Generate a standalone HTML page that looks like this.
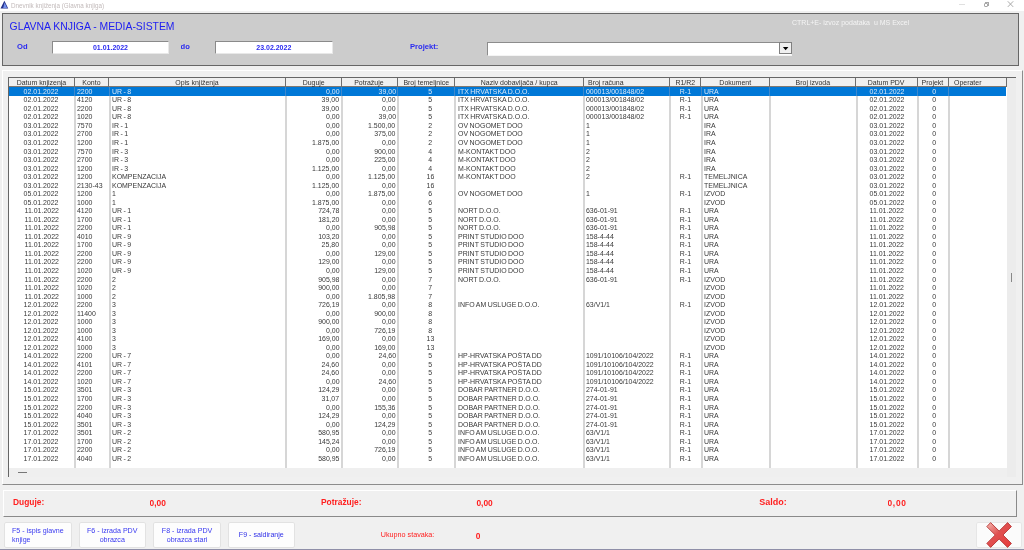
<!DOCTYPE html>
<html><head><meta charset="utf-8"><style>
*{margin:0;padding:0;box-sizing:border-box}
html,body{width:1024px;height:550px;overflow:hidden;background:#f0f0f0;font-family:"Liberation Sans",sans-serif}
.a{position:absolute}
.t{position:absolute;white-space:nowrap;overflow:hidden}
.hd{font-size:8px;color:#303030;line-height:9px}
.s{display:inline-block;transform:scaleX(.87)}
.l .s{transform-origin:0 50%}.c .s{transform-origin:50% 50%}.r .s{transform-origin:100% 50%}
.rw{font-size:8px;color:#383838;line-height:8.5px;word-spacing:-0.5px}
.sel{color:#d8e8f8}
.lbl{font-weight:bold;color:#2a2af0}
</style></head><body><div class="a" style="left:0;top:0;width:1024px;height:550px;will-change:transform">

<div class="a" style="left:0;top:0;width:1024px;height:10.5px;background:#fff"></div>
<svg class="a" style="left:0;top:0" width="10" height="10" viewBox="0 0 10 10"><polygon points="4.4,0.8 8.2,8.6 0.5,8.6" fill="#23308a"/><polygon points="4.6,2.6 7.1,7.9 3.2,7.9" fill="#7592ee"/></svg>
<div class="t" style="left:11px;top:1px;font-size:6.3px;line-height:9px;color:#c2baba">Dnevnik knjiženja (Glavna knjiga)</div>
<div class="a" style="left:959px;top:4px;width:6px;height:1px;background:#e0e0e0"></div>
<div class="a" style="left:983.5px;top:2.5px;width:4.5px;height:4.5px;border:1px solid #a8a8a8;border-radius:1px"></div>
<div class="a" style="left:985px;top:1.5px;width:4px;height:4px;border-top:1px solid #a8a8a8;border-right:1px solid #a8a8a8"></div>
<svg class="a" style="left:1006px;top:0" width="9" height="9" viewBox="0 0 9 9"><path d="M1.8,1.3 L7.2,6.9 M7.2,1.3 L1.8,6.9" stroke="#a0a0a0" stroke-width="0.9"/></svg>
<div class="a" style="left:2px;top:13px;width:1017px;height:53px;background:#cccccc;border:1px solid #666;border-right-width:1.3px;border-bottom-width:1.3px"></div>
<div class="t" style="left:9.6px;top:20px;font-size:10.4px;line-height:13px;color:#2020f0">GLAVNA KNJIGA - MEDIA-SISTEM</div>
<div class="t" style="left:792px;top:17.6px;font-size:7px;line-height:10px;color:#f4f4f4">CTRL+E- izvoz podataka &nbsp;u MS Excel</div>
<div class="t lbl" style="left:17px;top:41.5px;font-size:7.6px;line-height:10px">Od</div>
<div class="t lbl" style="left:180.5px;top:41.5px;font-size:7.6px;line-height:10px">do</div>
<div class="t lbl" style="left:410px;top:41.5px;font-size:7.6px;line-height:10px">Projekt:</div>
<div class="a" style="left:52px;top:40.6px;width:117px;height:13.6px;background:#fff;border-top:1px solid #8a8a8a;border-left:1px solid #8a8a8a;border-bottom:1px solid #e8e8e8;border-right:1px solid #e8e8e8"></div>
<div class="t lbl" style="left:52px;top:42.6px;width:117px;text-align:center;font-size:7px;line-height:10px">01.01.2022</div>
<div class="a" style="left:215px;top:40.6px;width:117.60000000000002px;height:13.6px;background:#fff;border-top:1px solid #8a8a8a;border-left:1px solid #8a8a8a;border-bottom:1px solid #e8e8e8;border-right:1px solid #e8e8e8"></div>
<div class="t lbl" style="left:215px;top:42.6px;width:117.60000000000002px;text-align:center;font-size:7px;line-height:10px">23.02.2022</div>
<div class="a" style="left:487.3px;top:41.7px;width:305.2px;height:14px;background:#fff;border-top:1px solid #8c8c8c;border-left:1px solid #8c8c8c;border-bottom:1px solid #f4f4f4;border-right:1px solid #f4f4f4"></div>
<div class="a" style="left:779.2px;top:42.1px;width:12.5px;height:11.8px;background:#f0f0f0;border:1px solid #808080"></div>
<svg class="a" style="left:782px;top:46px" width="8" height="5" viewBox="0 0 8 5"><polygon points="0.9,0.9 6.4,0.9 3.65,4.2" fill="#000"/></svg>
<div class="a" style="left:2px;top:70px;width:1021px;height:415px;background:#f0f0f0;border-top:1px solid #fff;border-left:1px solid #fff;border-right:1.2px solid #8c8c8c;border-bottom:1.2px solid #8c8c8c"></div>
<div class="a" style="left:9px;top:87px;width:998.3px;height:381.4px;background:#fff"></div>
<div class="a" style="left:1007.3px;top:78px;width:9px;height:399px;background:#ececec"></div>
<div class="a" style="left:1011px;top:273px;width:1.1px;height:9px;background:#888"></div>
<div class="a" style="left:9px;top:468.4px;width:998.3px;height:8.6px;background:#efefef"></div>
<div class="a" style="left:18px;top:472px;width:9px;height:0.8px;background:#777"></div>
<div class="a" style="left:8.3px;top:77.3px;width:1.1px;height:399.7px;background:#666"></div>
<div class="a" style="left:8.3px;top:77.3px;width:1008px;height:1.1px;background:#666"></div>
<div class="a" style="left:9.4px;top:78.4px;width:997.1px;height:8px;background:#f0f0f0"></div>
<div class="a" style="left:9.4px;top:86.1px;width:997.1px;height:0.9px;background:#807870"></div>
<div class="a" style="left:73.8px;top:78.4px;width:1.1px;height:8.6px;background:#6e6e6e"></div>
<div class="a" style="left:74.0px;top:87px;width:2px;height:381.4px;background:#d6d6d6"></div>
<div class="a" style="left:108.3px;top:78.4px;width:1.1px;height:8.6px;background:#6e6e6e"></div>
<div class="a" style="left:108.5px;top:87px;width:2px;height:381.4px;background:#d6d6d6"></div>
<div class="a" style="left:284.9px;top:78.4px;width:1.1px;height:8.6px;background:#6e6e6e"></div>
<div class="a" style="left:285.09999999999997px;top:87px;width:2px;height:381.4px;background:#d6d6d6"></div>
<div class="a" style="left:340.7px;top:78.4px;width:1.1px;height:8.6px;background:#6e6e6e"></div>
<div class="a" style="left:340.9px;top:87px;width:2px;height:381.4px;background:#d6d6d6"></div>
<div class="a" style="left:397.1px;top:78.4px;width:1.1px;height:8.6px;background:#6e6e6e"></div>
<div class="a" style="left:397.3px;top:87px;width:2px;height:381.4px;background:#d6d6d6"></div>
<div class="a" style="left:454.2px;top:78.4px;width:1.1px;height:8.6px;background:#6e6e6e"></div>
<div class="a" style="left:454.4px;top:87px;width:2px;height:381.4px;background:#d6d6d6"></div>
<div class="a" style="left:582.8px;top:78.4px;width:1.1px;height:8.6px;background:#6e6e6e"></div>
<div class="a" style="left:583.0px;top:87px;width:2px;height:381.4px;background:#d6d6d6"></div>
<div class="a" style="left:669.1px;top:78.4px;width:1.1px;height:8.6px;background:#6e6e6e"></div>
<div class="a" style="left:669.3000000000001px;top:87px;width:2px;height:381.4px;background:#d6d6d6"></div>
<div class="a" style="left:700.4px;top:78.4px;width:1.1px;height:8.6px;background:#6e6e6e"></div>
<div class="a" style="left:700.6px;top:87px;width:2px;height:381.4px;background:#d6d6d6"></div>
<div class="a" style="left:768.9px;top:78.4px;width:1.1px;height:8.6px;background:#6e6e6e"></div>
<div class="a" style="left:769.1px;top:87px;width:2px;height:381.4px;background:#d6d6d6"></div>
<div class="a" style="left:855.3px;top:78.4px;width:1.1px;height:8.6px;background:#6e6e6e"></div>
<div class="a" style="left:855.5px;top:87px;width:2px;height:381.4px;background:#d6d6d6"></div>
<div class="a" style="left:916.8px;top:78.4px;width:1.1px;height:8.6px;background:#6e6e6e"></div>
<div class="a" style="left:917.0px;top:87px;width:2px;height:381.4px;background:#d6d6d6"></div>
<div class="a" style="left:948.0px;top:78.4px;width:1.1px;height:8.6px;background:#6e6e6e"></div>
<div class="a" style="left:948.2px;top:87px;width:2px;height:381.4px;background:#d6d6d6"></div>
<div class="a" style="left:1006.0px;top:78.4px;width:1.1px;height:8.6px;background:#6e6e6e"></div>
<div class="a" style="left:9.4px;top:87.3px;width:997.1px;height:8.4px;background:#0078d7"></div>
<div class="a" style="left:74.0px;top:87.3px;width:1px;height:8.4px;background:#3d88cc"></div>
<div class="a" style="left:108.5px;top:87.3px;width:1px;height:8.4px;background:#3d88cc"></div>
<div class="a" style="left:285.09999999999997px;top:87.3px;width:1px;height:8.4px;background:#3d88cc"></div>
<div class="a" style="left:340.9px;top:87.3px;width:1px;height:8.4px;background:#3d88cc"></div>
<div class="a" style="left:397.3px;top:87.3px;width:1px;height:8.4px;background:#3d88cc"></div>
<div class="a" style="left:454.4px;top:87.3px;width:1px;height:8.4px;background:#3d88cc"></div>
<div class="a" style="left:583.0px;top:87.3px;width:1px;height:8.4px;background:#3d88cc"></div>
<div class="a" style="left:669.3000000000001px;top:87.3px;width:1px;height:8.4px;background:#3d88cc"></div>
<div class="a" style="left:700.6px;top:87.3px;width:1px;height:8.4px;background:#3d88cc"></div>
<div class="a" style="left:769.1px;top:87.3px;width:1px;height:8.4px;background:#3d88cc"></div>
<div class="a" style="left:855.5px;top:87.3px;width:1px;height:8.4px;background:#3d88cc"></div>
<div class="a" style="left:917.0px;top:87.3px;width:1px;height:8.4px;background:#3d88cc"></div>
<div class="a" style="left:948.2px;top:87.3px;width:1px;height:8.4px;background:#3d88cc"></div>
<div class="a" style="left:0;top:0;width:1024px;height:550px;will-change:transform">
<div class="t hd c" style="left:9.5px;top:77.6px;width:63.8px;text-align:center;"><span class="s">Datum knjizenja</span></div>
<div class="t hd c" style="left:75.3px;top:77.6px;width:32.5px;text-align:center;"><span class="s">Konto</span></div>
<div class="t hd c" style="left:109.8px;top:77.6px;width:174.6px;text-align:center;"><span class="s">Opis knjiženja</span></div>
<div class="t hd c" style="left:286.4px;top:77.6px;width:53.8px;text-align:center;"><span class="s">Duguje</span></div>
<div class="t hd c" style="left:342.2px;top:77.6px;width:54.4px;text-align:center;"><span class="s">Potražuje</span></div>
<div class="t hd c" style="left:398.6px;top:77.6px;width:55.1px;text-align:center;"><span class="s">Broj temeljnice</span></div>
<div class="t hd c" style="left:455.7px;top:77.6px;width:126.6px;text-align:center;"><span class="s">Naziv dobavljača / kupca</span></div>
<div class="t hd l" style="left:584.3px;top:77.6px;width:84.3px;text-align:left;padding-left:4px;"><span class="s">Broj računa</span></div>
<div class="t hd c" style="left:670.6px;top:77.6px;width:29.3px;text-align:center;"><span class="s">R1/R2</span></div>
<div class="t hd c" style="left:701.9px;top:77.6px;width:66.5px;text-align:center;"><span class="s">Dokument</span></div>
<div class="t hd c" style="left:770.4px;top:77.6px;width:84.4px;text-align:center;"><span class="s">Broj izvoda</span></div>
<div class="t hd c" style="left:856.8px;top:77.6px;width:59.5px;text-align:center;"><span class="s">Datum PDV</span></div>
<div class="t hd c" style="left:918.3px;top:77.6px;width:29.2px;text-align:center;"><span class="s">Projekt</span></div>
<div class="t hd l" style="left:949.5px;top:77.6px;width:56.0px;text-align:left;padding-left:4px;"><span class="s">Operater</span></div>
<div class="t rw sel c" style="left:9.5px;top:87.80px;width:63.8px;text-align:center;"><span class="s">02.01.2022</span></div>
<div class="t rw sel l" style="left:75.3px;top:87.80px;width:32.5px;text-align:left;padding-left:2px;"><span class="s">2200</span></div>
<div class="t rw sel l" style="left:109.8px;top:87.80px;width:174.6px;text-align:left;padding-left:2px;"><span class="s">UR - 8</span></div>
<div class="t rw sel r" style="left:286.4px;top:87.80px;width:53.8px;text-align:right;padding-right:1px;"><span class="s">0,00</span></div>
<div class="t rw sel r" style="left:342.2px;top:87.80px;width:54.4px;text-align:right;padding-right:1px;"><span class="s">39,00</span></div>
<div class="t rw sel c" style="left:398.6px;top:87.80px;width:55.1px;text-align:center;padding-left:8px;"><span class="s">5</span></div>
<div class="t rw sel l" style="left:455.7px;top:87.80px;width:126.6px;text-align:left;padding-left:2px;"><span class="s">ITX HRVATSKA D.O.O.</span></div>
<div class="t rw sel l" style="left:584.3px;top:87.80px;width:84.3px;text-align:left;padding-left:2px;"><span class="s">000013/001848/02</span></div>
<div class="t rw sel c" style="left:670.6px;top:87.80px;width:29.3px;text-align:center;"><span class="s">R-1</span></div>
<div class="t rw sel l" style="left:701.9px;top:87.80px;width:66.5px;text-align:left;padding-left:2px;"><span class="s">URA</span></div>
<div class="t rw sel c" style="left:856.8px;top:87.80px;width:59.5px;text-align:center;"><span class="s">02.01.2022</span></div>
<div class="t rw sel c" style="left:918.3px;top:87.80px;width:29.2px;text-align:center;padding-left:3px;"><span class="s">0</span></div>
<div class="t rw c" style="left:9.5px;top:96.33px;width:63.8px;text-align:center;"><span class="s">02.01.2022</span></div>
<div class="t rw l" style="left:75.3px;top:96.33px;width:32.5px;text-align:left;padding-left:2px;"><span class="s">4120</span></div>
<div class="t rw l" style="left:109.8px;top:96.33px;width:174.6px;text-align:left;padding-left:2px;"><span class="s">UR - 8</span></div>
<div class="t rw r" style="left:286.4px;top:96.33px;width:53.8px;text-align:right;padding-right:1px;"><span class="s">39,00</span></div>
<div class="t rw r" style="left:342.2px;top:96.33px;width:54.4px;text-align:right;padding-right:1px;"><span class="s">0,00</span></div>
<div class="t rw c" style="left:398.6px;top:96.33px;width:55.1px;text-align:center;padding-left:8px;"><span class="s">5</span></div>
<div class="t rw l" style="left:455.7px;top:96.33px;width:126.6px;text-align:left;padding-left:2px;"><span class="s">ITX HRVATSKA D.O.O.</span></div>
<div class="t rw l" style="left:584.3px;top:96.33px;width:84.3px;text-align:left;padding-left:2px;"><span class="s">000013/001848/02</span></div>
<div class="t rw c" style="left:670.6px;top:96.33px;width:29.3px;text-align:center;"><span class="s">R-1</span></div>
<div class="t rw l" style="left:701.9px;top:96.33px;width:66.5px;text-align:left;padding-left:2px;"><span class="s">URA</span></div>
<div class="t rw c" style="left:856.8px;top:96.33px;width:59.5px;text-align:center;"><span class="s">02.01.2022</span></div>
<div class="t rw c" style="left:918.3px;top:96.33px;width:29.2px;text-align:center;padding-left:3px;"><span class="s">0</span></div>
<div class="t rw c" style="left:9.5px;top:104.87px;width:63.8px;text-align:center;"><span class="s">02.01.2022</span></div>
<div class="t rw l" style="left:75.3px;top:104.87px;width:32.5px;text-align:left;padding-left:2px;"><span class="s">2200</span></div>
<div class="t rw l" style="left:109.8px;top:104.87px;width:174.6px;text-align:left;padding-left:2px;"><span class="s">UR - 8</span></div>
<div class="t rw r" style="left:286.4px;top:104.87px;width:53.8px;text-align:right;padding-right:1px;"><span class="s">39,00</span></div>
<div class="t rw r" style="left:342.2px;top:104.87px;width:54.4px;text-align:right;padding-right:1px;"><span class="s">0,00</span></div>
<div class="t rw c" style="left:398.6px;top:104.87px;width:55.1px;text-align:center;padding-left:8px;"><span class="s">5</span></div>
<div class="t rw l" style="left:455.7px;top:104.87px;width:126.6px;text-align:left;padding-left:2px;"><span class="s">ITX HRVATSKA D.O.O.</span></div>
<div class="t rw l" style="left:584.3px;top:104.87px;width:84.3px;text-align:left;padding-left:2px;"><span class="s">000013/001848/02</span></div>
<div class="t rw c" style="left:670.6px;top:104.87px;width:29.3px;text-align:center;"><span class="s">R-1</span></div>
<div class="t rw l" style="left:701.9px;top:104.87px;width:66.5px;text-align:left;padding-left:2px;"><span class="s">URA</span></div>
<div class="t rw c" style="left:856.8px;top:104.87px;width:59.5px;text-align:center;"><span class="s">02.01.2022</span></div>
<div class="t rw c" style="left:918.3px;top:104.87px;width:29.2px;text-align:center;padding-left:3px;"><span class="s">0</span></div>
<div class="t rw c" style="left:9.5px;top:113.40px;width:63.8px;text-align:center;"><span class="s">02.01.2022</span></div>
<div class="t rw l" style="left:75.3px;top:113.40px;width:32.5px;text-align:left;padding-left:2px;"><span class="s">1020</span></div>
<div class="t rw l" style="left:109.8px;top:113.40px;width:174.6px;text-align:left;padding-left:2px;"><span class="s">UR - 8</span></div>
<div class="t rw r" style="left:286.4px;top:113.40px;width:53.8px;text-align:right;padding-right:1px;"><span class="s">0,00</span></div>
<div class="t rw r" style="left:342.2px;top:113.40px;width:54.4px;text-align:right;padding-right:1px;"><span class="s">39,00</span></div>
<div class="t rw c" style="left:398.6px;top:113.40px;width:55.1px;text-align:center;padding-left:8px;"><span class="s">5</span></div>
<div class="t rw l" style="left:455.7px;top:113.40px;width:126.6px;text-align:left;padding-left:2px;"><span class="s">ITX HRVATSKA D.O.O.</span></div>
<div class="t rw l" style="left:584.3px;top:113.40px;width:84.3px;text-align:left;padding-left:2px;"><span class="s">000013/001848/02</span></div>
<div class="t rw c" style="left:670.6px;top:113.40px;width:29.3px;text-align:center;"><span class="s">R-1</span></div>
<div class="t rw l" style="left:701.9px;top:113.40px;width:66.5px;text-align:left;padding-left:2px;"><span class="s">URA</span></div>
<div class="t rw c" style="left:856.8px;top:113.40px;width:59.5px;text-align:center;"><span class="s">02.01.2022</span></div>
<div class="t rw c" style="left:918.3px;top:113.40px;width:29.2px;text-align:center;padding-left:3px;"><span class="s">0</span></div>
<div class="t rw c" style="left:9.5px;top:121.93px;width:63.8px;text-align:center;"><span class="s">03.01.2022</span></div>
<div class="t rw l" style="left:75.3px;top:121.93px;width:32.5px;text-align:left;padding-left:2px;"><span class="s">7570</span></div>
<div class="t rw l" style="left:109.8px;top:121.93px;width:174.6px;text-align:left;padding-left:2px;"><span class="s">IR - 1</span></div>
<div class="t rw r" style="left:286.4px;top:121.93px;width:53.8px;text-align:right;padding-right:1px;"><span class="s">0,00</span></div>
<div class="t rw r" style="left:342.2px;top:121.93px;width:54.4px;text-align:right;padding-right:1px;"><span class="s">1.500,00</span></div>
<div class="t rw c" style="left:398.6px;top:121.93px;width:55.1px;text-align:center;padding-left:8px;"><span class="s">2</span></div>
<div class="t rw l" style="left:455.7px;top:121.93px;width:126.6px;text-align:left;padding-left:2px;"><span class="s">OV NOGOMET DOO</span></div>
<div class="t rw l" style="left:584.3px;top:121.93px;width:84.3px;text-align:left;padding-left:2px;"><span class="s">1</span></div>
<div class="t rw l" style="left:701.9px;top:121.93px;width:66.5px;text-align:left;padding-left:2px;"><span class="s">IRA</span></div>
<div class="t rw c" style="left:856.8px;top:121.93px;width:59.5px;text-align:center;"><span class="s">03.01.2022</span></div>
<div class="t rw c" style="left:918.3px;top:121.93px;width:29.2px;text-align:center;padding-left:3px;"><span class="s">0</span></div>
<div class="t rw c" style="left:9.5px;top:130.47px;width:63.8px;text-align:center;"><span class="s">03.01.2022</span></div>
<div class="t rw l" style="left:75.3px;top:130.47px;width:32.5px;text-align:left;padding-left:2px;"><span class="s">2700</span></div>
<div class="t rw l" style="left:109.8px;top:130.47px;width:174.6px;text-align:left;padding-left:2px;"><span class="s">IR - 1</span></div>
<div class="t rw r" style="left:286.4px;top:130.47px;width:53.8px;text-align:right;padding-right:1px;"><span class="s">0,00</span></div>
<div class="t rw r" style="left:342.2px;top:130.47px;width:54.4px;text-align:right;padding-right:1px;"><span class="s">375,00</span></div>
<div class="t rw c" style="left:398.6px;top:130.47px;width:55.1px;text-align:center;padding-left:8px;"><span class="s">2</span></div>
<div class="t rw l" style="left:455.7px;top:130.47px;width:126.6px;text-align:left;padding-left:2px;"><span class="s">OV NOGOMET DOO</span></div>
<div class="t rw l" style="left:584.3px;top:130.47px;width:84.3px;text-align:left;padding-left:2px;"><span class="s">1</span></div>
<div class="t rw l" style="left:701.9px;top:130.47px;width:66.5px;text-align:left;padding-left:2px;"><span class="s">IRA</span></div>
<div class="t rw c" style="left:856.8px;top:130.47px;width:59.5px;text-align:center;"><span class="s">03.01.2022</span></div>
<div class="t rw c" style="left:918.3px;top:130.47px;width:29.2px;text-align:center;padding-left:3px;"><span class="s">0</span></div>
<div class="t rw c" style="left:9.5px;top:139.00px;width:63.8px;text-align:center;"><span class="s">03.01.2022</span></div>
<div class="t rw l" style="left:75.3px;top:139.00px;width:32.5px;text-align:left;padding-left:2px;"><span class="s">1200</span></div>
<div class="t rw l" style="left:109.8px;top:139.00px;width:174.6px;text-align:left;padding-left:2px;"><span class="s">IR - 1</span></div>
<div class="t rw r" style="left:286.4px;top:139.00px;width:53.8px;text-align:right;padding-right:1px;"><span class="s">1.875,00</span></div>
<div class="t rw r" style="left:342.2px;top:139.00px;width:54.4px;text-align:right;padding-right:1px;"><span class="s">0,00</span></div>
<div class="t rw c" style="left:398.6px;top:139.00px;width:55.1px;text-align:center;padding-left:8px;"><span class="s">2</span></div>
<div class="t rw l" style="left:455.7px;top:139.00px;width:126.6px;text-align:left;padding-left:2px;"><span class="s">OV NOGOMET DOO</span></div>
<div class="t rw l" style="left:584.3px;top:139.00px;width:84.3px;text-align:left;padding-left:2px;"><span class="s">1</span></div>
<div class="t rw l" style="left:701.9px;top:139.00px;width:66.5px;text-align:left;padding-left:2px;"><span class="s">IRA</span></div>
<div class="t rw c" style="left:856.8px;top:139.00px;width:59.5px;text-align:center;"><span class="s">03.01.2022</span></div>
<div class="t rw c" style="left:918.3px;top:139.00px;width:29.2px;text-align:center;padding-left:3px;"><span class="s">0</span></div>
<div class="t rw c" style="left:9.5px;top:147.53px;width:63.8px;text-align:center;"><span class="s">03.01.2022</span></div>
<div class="t rw l" style="left:75.3px;top:147.53px;width:32.5px;text-align:left;padding-left:2px;"><span class="s">7570</span></div>
<div class="t rw l" style="left:109.8px;top:147.53px;width:174.6px;text-align:left;padding-left:2px;"><span class="s">IR - 3</span></div>
<div class="t rw r" style="left:286.4px;top:147.53px;width:53.8px;text-align:right;padding-right:1px;"><span class="s">0,00</span></div>
<div class="t rw r" style="left:342.2px;top:147.53px;width:54.4px;text-align:right;padding-right:1px;"><span class="s">900,00</span></div>
<div class="t rw c" style="left:398.6px;top:147.53px;width:55.1px;text-align:center;padding-left:8px;"><span class="s">4</span></div>
<div class="t rw l" style="left:455.7px;top:147.53px;width:126.6px;text-align:left;padding-left:2px;"><span class="s">M-KONTAKT DOO</span></div>
<div class="t rw l" style="left:584.3px;top:147.53px;width:84.3px;text-align:left;padding-left:2px;"><span class="s">2</span></div>
<div class="t rw l" style="left:701.9px;top:147.53px;width:66.5px;text-align:left;padding-left:2px;"><span class="s">IRA</span></div>
<div class="t rw c" style="left:856.8px;top:147.53px;width:59.5px;text-align:center;"><span class="s">03.01.2022</span></div>
<div class="t rw c" style="left:918.3px;top:147.53px;width:29.2px;text-align:center;padding-left:3px;"><span class="s">0</span></div>
<div class="t rw c" style="left:9.5px;top:156.06px;width:63.8px;text-align:center;"><span class="s">03.01.2022</span></div>
<div class="t rw l" style="left:75.3px;top:156.06px;width:32.5px;text-align:left;padding-left:2px;"><span class="s">2700</span></div>
<div class="t rw l" style="left:109.8px;top:156.06px;width:174.6px;text-align:left;padding-left:2px;"><span class="s">IR - 3</span></div>
<div class="t rw r" style="left:286.4px;top:156.06px;width:53.8px;text-align:right;padding-right:1px;"><span class="s">0,00</span></div>
<div class="t rw r" style="left:342.2px;top:156.06px;width:54.4px;text-align:right;padding-right:1px;"><span class="s">225,00</span></div>
<div class="t rw c" style="left:398.6px;top:156.06px;width:55.1px;text-align:center;padding-left:8px;"><span class="s">4</span></div>
<div class="t rw l" style="left:455.7px;top:156.06px;width:126.6px;text-align:left;padding-left:2px;"><span class="s">M-KONTAKT DOO</span></div>
<div class="t rw l" style="left:584.3px;top:156.06px;width:84.3px;text-align:left;padding-left:2px;"><span class="s">2</span></div>
<div class="t rw l" style="left:701.9px;top:156.06px;width:66.5px;text-align:left;padding-left:2px;"><span class="s">IRA</span></div>
<div class="t rw c" style="left:856.8px;top:156.06px;width:59.5px;text-align:center;"><span class="s">03.01.2022</span></div>
<div class="t rw c" style="left:918.3px;top:156.06px;width:29.2px;text-align:center;padding-left:3px;"><span class="s">0</span></div>
<div class="t rw c" style="left:9.5px;top:164.60px;width:63.8px;text-align:center;"><span class="s">03.01.2022</span></div>
<div class="t rw l" style="left:75.3px;top:164.60px;width:32.5px;text-align:left;padding-left:2px;"><span class="s">1200</span></div>
<div class="t rw l" style="left:109.8px;top:164.60px;width:174.6px;text-align:left;padding-left:2px;"><span class="s">IR - 3</span></div>
<div class="t rw r" style="left:286.4px;top:164.60px;width:53.8px;text-align:right;padding-right:1px;"><span class="s">1.125,00</span></div>
<div class="t rw r" style="left:342.2px;top:164.60px;width:54.4px;text-align:right;padding-right:1px;"><span class="s">0,00</span></div>
<div class="t rw c" style="left:398.6px;top:164.60px;width:55.1px;text-align:center;padding-left:8px;"><span class="s">4</span></div>
<div class="t rw l" style="left:455.7px;top:164.60px;width:126.6px;text-align:left;padding-left:2px;"><span class="s">M-KONTAKT DOO</span></div>
<div class="t rw l" style="left:584.3px;top:164.60px;width:84.3px;text-align:left;padding-left:2px;"><span class="s">2</span></div>
<div class="t rw l" style="left:701.9px;top:164.60px;width:66.5px;text-align:left;padding-left:2px;"><span class="s">IRA</span></div>
<div class="t rw c" style="left:856.8px;top:164.60px;width:59.5px;text-align:center;"><span class="s">03.01.2022</span></div>
<div class="t rw c" style="left:918.3px;top:164.60px;width:29.2px;text-align:center;padding-left:3px;"><span class="s">0</span></div>
<div class="t rw c" style="left:9.5px;top:173.13px;width:63.8px;text-align:center;"><span class="s">03.01.2022</span></div>
<div class="t rw l" style="left:75.3px;top:173.13px;width:32.5px;text-align:left;padding-left:2px;"><span class="s">1200</span></div>
<div class="t rw l" style="left:109.8px;top:173.13px;width:174.6px;text-align:left;padding-left:2px;"><span class="s">KOMPENZACIJA</span></div>
<div class="t rw r" style="left:286.4px;top:173.13px;width:53.8px;text-align:right;padding-right:1px;"><span class="s">0,00</span></div>
<div class="t rw r" style="left:342.2px;top:173.13px;width:54.4px;text-align:right;padding-right:1px;"><span class="s">1.125,00</span></div>
<div class="t rw c" style="left:398.6px;top:173.13px;width:55.1px;text-align:center;padding-left:8px;"><span class="s">16</span></div>
<div class="t rw l" style="left:455.7px;top:173.13px;width:126.6px;text-align:left;padding-left:2px;"><span class="s">M-KONTAKT DOO</span></div>
<div class="t rw l" style="left:584.3px;top:173.13px;width:84.3px;text-align:left;padding-left:2px;"><span class="s">2</span></div>
<div class="t rw c" style="left:670.6px;top:173.13px;width:29.3px;text-align:center;"><span class="s">R-1</span></div>
<div class="t rw l" style="left:701.9px;top:173.13px;width:66.5px;text-align:left;padding-left:2px;"><span class="s">TEMELJNICA</span></div>
<div class="t rw c" style="left:856.8px;top:173.13px;width:59.5px;text-align:center;"><span class="s">03.01.2022</span></div>
<div class="t rw c" style="left:918.3px;top:173.13px;width:29.2px;text-align:center;padding-left:3px;"><span class="s">0</span></div>
<div class="t rw c" style="left:9.5px;top:181.66px;width:63.8px;text-align:center;"><span class="s">03.01.2022</span></div>
<div class="t rw l" style="left:75.3px;top:181.66px;width:32.5px;text-align:left;padding-left:2px;"><span class="s">2130-43</span></div>
<div class="t rw l" style="left:109.8px;top:181.66px;width:174.6px;text-align:left;padding-left:2px;"><span class="s">KOMPENZACIJA</span></div>
<div class="t rw r" style="left:286.4px;top:181.66px;width:53.8px;text-align:right;padding-right:1px;"><span class="s">1.125,00</span></div>
<div class="t rw r" style="left:342.2px;top:181.66px;width:54.4px;text-align:right;padding-right:1px;"><span class="s">0,00</span></div>
<div class="t rw c" style="left:398.6px;top:181.66px;width:55.1px;text-align:center;padding-left:8px;"><span class="s">16</span></div>
<div class="t rw l" style="left:701.9px;top:181.66px;width:66.5px;text-align:left;padding-left:2px;"><span class="s">TEMELJNICA</span></div>
<div class="t rw c" style="left:856.8px;top:181.66px;width:59.5px;text-align:center;"><span class="s">03.01.2022</span></div>
<div class="t rw c" style="left:918.3px;top:181.66px;width:29.2px;text-align:center;padding-left:3px;"><span class="s">0</span></div>
<div class="t rw c" style="left:9.5px;top:190.20px;width:63.8px;text-align:center;"><span class="s">05.01.2022</span></div>
<div class="t rw l" style="left:75.3px;top:190.20px;width:32.5px;text-align:left;padding-left:2px;"><span class="s">1200</span></div>
<div class="t rw l" style="left:109.8px;top:190.20px;width:174.6px;text-align:left;padding-left:2px;"><span class="s">1</span></div>
<div class="t rw r" style="left:286.4px;top:190.20px;width:53.8px;text-align:right;padding-right:1px;"><span class="s">0,00</span></div>
<div class="t rw r" style="left:342.2px;top:190.20px;width:54.4px;text-align:right;padding-right:1px;"><span class="s">1.875,00</span></div>
<div class="t rw c" style="left:398.6px;top:190.20px;width:55.1px;text-align:center;padding-left:8px;"><span class="s">6</span></div>
<div class="t rw l" style="left:455.7px;top:190.20px;width:126.6px;text-align:left;padding-left:2px;"><span class="s">OV NOGOMET DOO</span></div>
<div class="t rw l" style="left:584.3px;top:190.20px;width:84.3px;text-align:left;padding-left:2px;"><span class="s">1</span></div>
<div class="t rw c" style="left:670.6px;top:190.20px;width:29.3px;text-align:center;"><span class="s">R-1</span></div>
<div class="t rw l" style="left:701.9px;top:190.20px;width:66.5px;text-align:left;padding-left:2px;"><span class="s">IZVOD</span></div>
<div class="t rw c" style="left:856.8px;top:190.20px;width:59.5px;text-align:center;"><span class="s">05.01.2022</span></div>
<div class="t rw c" style="left:918.3px;top:190.20px;width:29.2px;text-align:center;padding-left:3px;"><span class="s">0</span></div>
<div class="t rw c" style="left:9.5px;top:198.73px;width:63.8px;text-align:center;"><span class="s">05.01.2022</span></div>
<div class="t rw l" style="left:75.3px;top:198.73px;width:32.5px;text-align:left;padding-left:2px;"><span class="s">1000</span></div>
<div class="t rw l" style="left:109.8px;top:198.73px;width:174.6px;text-align:left;padding-left:2px;"><span class="s">1</span></div>
<div class="t rw r" style="left:286.4px;top:198.73px;width:53.8px;text-align:right;padding-right:1px;"><span class="s">1.875,00</span></div>
<div class="t rw r" style="left:342.2px;top:198.73px;width:54.4px;text-align:right;padding-right:1px;"><span class="s">0,00</span></div>
<div class="t rw c" style="left:398.6px;top:198.73px;width:55.1px;text-align:center;padding-left:8px;"><span class="s">6</span></div>
<div class="t rw l" style="left:701.9px;top:198.73px;width:66.5px;text-align:left;padding-left:2px;"><span class="s">IZVOD</span></div>
<div class="t rw c" style="left:856.8px;top:198.73px;width:59.5px;text-align:center;"><span class="s">05.01.2022</span></div>
<div class="t rw c" style="left:918.3px;top:198.73px;width:29.2px;text-align:center;padding-left:3px;"><span class="s">0</span></div>
<div class="t rw c" style="left:9.5px;top:207.26px;width:63.8px;text-align:center;"><span class="s">11.01.2022</span></div>
<div class="t rw l" style="left:75.3px;top:207.26px;width:32.5px;text-align:left;padding-left:2px;"><span class="s">4120</span></div>
<div class="t rw l" style="left:109.8px;top:207.26px;width:174.6px;text-align:left;padding-left:2px;"><span class="s">UR - 1</span></div>
<div class="t rw r" style="left:286.4px;top:207.26px;width:53.8px;text-align:right;padding-right:1px;"><span class="s">724,78</span></div>
<div class="t rw r" style="left:342.2px;top:207.26px;width:54.4px;text-align:right;padding-right:1px;"><span class="s">0,00</span></div>
<div class="t rw c" style="left:398.6px;top:207.26px;width:55.1px;text-align:center;padding-left:8px;"><span class="s">5</span></div>
<div class="t rw l" style="left:455.7px;top:207.26px;width:126.6px;text-align:left;padding-left:2px;"><span class="s">NORT D.O.O.</span></div>
<div class="t rw l" style="left:584.3px;top:207.26px;width:84.3px;text-align:left;padding-left:2px;"><span class="s">636-01-91</span></div>
<div class="t rw c" style="left:670.6px;top:207.26px;width:29.3px;text-align:center;"><span class="s">R-1</span></div>
<div class="t rw l" style="left:701.9px;top:207.26px;width:66.5px;text-align:left;padding-left:2px;"><span class="s">URA</span></div>
<div class="t rw c" style="left:856.8px;top:207.26px;width:59.5px;text-align:center;"><span class="s">11.01.2022</span></div>
<div class="t rw c" style="left:918.3px;top:207.26px;width:29.2px;text-align:center;padding-left:3px;"><span class="s">0</span></div>
<div class="t rw c" style="left:9.5px;top:215.80px;width:63.8px;text-align:center;"><span class="s">11.01.2022</span></div>
<div class="t rw l" style="left:75.3px;top:215.80px;width:32.5px;text-align:left;padding-left:2px;"><span class="s">1700</span></div>
<div class="t rw l" style="left:109.8px;top:215.80px;width:174.6px;text-align:left;padding-left:2px;"><span class="s">UR - 1</span></div>
<div class="t rw r" style="left:286.4px;top:215.80px;width:53.8px;text-align:right;padding-right:1px;"><span class="s">181,20</span></div>
<div class="t rw r" style="left:342.2px;top:215.80px;width:54.4px;text-align:right;padding-right:1px;"><span class="s">0,00</span></div>
<div class="t rw c" style="left:398.6px;top:215.80px;width:55.1px;text-align:center;padding-left:8px;"><span class="s">5</span></div>
<div class="t rw l" style="left:455.7px;top:215.80px;width:126.6px;text-align:left;padding-left:2px;"><span class="s">NORT D.O.O.</span></div>
<div class="t rw l" style="left:584.3px;top:215.80px;width:84.3px;text-align:left;padding-left:2px;"><span class="s">636-01-91</span></div>
<div class="t rw c" style="left:670.6px;top:215.80px;width:29.3px;text-align:center;"><span class="s">R-1</span></div>
<div class="t rw l" style="left:701.9px;top:215.80px;width:66.5px;text-align:left;padding-left:2px;"><span class="s">URA</span></div>
<div class="t rw c" style="left:856.8px;top:215.80px;width:59.5px;text-align:center;"><span class="s">11.01.2022</span></div>
<div class="t rw c" style="left:918.3px;top:215.80px;width:29.2px;text-align:center;padding-left:3px;"><span class="s">0</span></div>
<div class="t rw c" style="left:9.5px;top:224.33px;width:63.8px;text-align:center;"><span class="s">11.01.2022</span></div>
<div class="t rw l" style="left:75.3px;top:224.33px;width:32.5px;text-align:left;padding-left:2px;"><span class="s">2200</span></div>
<div class="t rw l" style="left:109.8px;top:224.33px;width:174.6px;text-align:left;padding-left:2px;"><span class="s">UR - 1</span></div>
<div class="t rw r" style="left:286.4px;top:224.33px;width:53.8px;text-align:right;padding-right:1px;"><span class="s">0,00</span></div>
<div class="t rw r" style="left:342.2px;top:224.33px;width:54.4px;text-align:right;padding-right:1px;"><span class="s">905,98</span></div>
<div class="t rw c" style="left:398.6px;top:224.33px;width:55.1px;text-align:center;padding-left:8px;"><span class="s">5</span></div>
<div class="t rw l" style="left:455.7px;top:224.33px;width:126.6px;text-align:left;padding-left:2px;"><span class="s">NORT D.O.O.</span></div>
<div class="t rw l" style="left:584.3px;top:224.33px;width:84.3px;text-align:left;padding-left:2px;"><span class="s">636-01-91</span></div>
<div class="t rw c" style="left:670.6px;top:224.33px;width:29.3px;text-align:center;"><span class="s">R-1</span></div>
<div class="t rw l" style="left:701.9px;top:224.33px;width:66.5px;text-align:left;padding-left:2px;"><span class="s">URA</span></div>
<div class="t rw c" style="left:856.8px;top:224.33px;width:59.5px;text-align:center;"><span class="s">11.01.2022</span></div>
<div class="t rw c" style="left:918.3px;top:224.33px;width:29.2px;text-align:center;padding-left:3px;"><span class="s">0</span></div>
<div class="t rw c" style="left:9.5px;top:232.86px;width:63.8px;text-align:center;"><span class="s">11.01.2022</span></div>
<div class="t rw l" style="left:75.3px;top:232.86px;width:32.5px;text-align:left;padding-left:2px;"><span class="s">4010</span></div>
<div class="t rw l" style="left:109.8px;top:232.86px;width:174.6px;text-align:left;padding-left:2px;"><span class="s">UR - 9</span></div>
<div class="t rw r" style="left:286.4px;top:232.86px;width:53.8px;text-align:right;padding-right:1px;"><span class="s">103,20</span></div>
<div class="t rw r" style="left:342.2px;top:232.86px;width:54.4px;text-align:right;padding-right:1px;"><span class="s">0,00</span></div>
<div class="t rw c" style="left:398.6px;top:232.86px;width:55.1px;text-align:center;padding-left:8px;"><span class="s">5</span></div>
<div class="t rw l" style="left:455.7px;top:232.86px;width:126.6px;text-align:left;padding-left:2px;"><span class="s">PRINT STUDIO DOO</span></div>
<div class="t rw l" style="left:584.3px;top:232.86px;width:84.3px;text-align:left;padding-left:2px;"><span class="s">158-4-44</span></div>
<div class="t rw c" style="left:670.6px;top:232.86px;width:29.3px;text-align:center;"><span class="s">R-1</span></div>
<div class="t rw l" style="left:701.9px;top:232.86px;width:66.5px;text-align:left;padding-left:2px;"><span class="s">URA</span></div>
<div class="t rw c" style="left:856.8px;top:232.86px;width:59.5px;text-align:center;"><span class="s">11.01.2022</span></div>
<div class="t rw c" style="left:918.3px;top:232.86px;width:29.2px;text-align:center;padding-left:3px;"><span class="s">0</span></div>
<div class="t rw c" style="left:9.5px;top:241.39px;width:63.8px;text-align:center;"><span class="s">11.01.2022</span></div>
<div class="t rw l" style="left:75.3px;top:241.39px;width:32.5px;text-align:left;padding-left:2px;"><span class="s">1700</span></div>
<div class="t rw l" style="left:109.8px;top:241.39px;width:174.6px;text-align:left;padding-left:2px;"><span class="s">UR - 9</span></div>
<div class="t rw r" style="left:286.4px;top:241.39px;width:53.8px;text-align:right;padding-right:1px;"><span class="s">25,80</span></div>
<div class="t rw r" style="left:342.2px;top:241.39px;width:54.4px;text-align:right;padding-right:1px;"><span class="s">0,00</span></div>
<div class="t rw c" style="left:398.6px;top:241.39px;width:55.1px;text-align:center;padding-left:8px;"><span class="s">5</span></div>
<div class="t rw l" style="left:455.7px;top:241.39px;width:126.6px;text-align:left;padding-left:2px;"><span class="s">PRINT STUDIO DOO</span></div>
<div class="t rw l" style="left:584.3px;top:241.39px;width:84.3px;text-align:left;padding-left:2px;"><span class="s">158-4-44</span></div>
<div class="t rw c" style="left:670.6px;top:241.39px;width:29.3px;text-align:center;"><span class="s">R-1</span></div>
<div class="t rw l" style="left:701.9px;top:241.39px;width:66.5px;text-align:left;padding-left:2px;"><span class="s">URA</span></div>
<div class="t rw c" style="left:856.8px;top:241.39px;width:59.5px;text-align:center;"><span class="s">11.01.2022</span></div>
<div class="t rw c" style="left:918.3px;top:241.39px;width:29.2px;text-align:center;padding-left:3px;"><span class="s">0</span></div>
<div class="t rw c" style="left:9.5px;top:249.93px;width:63.8px;text-align:center;"><span class="s">11.01.2022</span></div>
<div class="t rw l" style="left:75.3px;top:249.93px;width:32.5px;text-align:left;padding-left:2px;"><span class="s">2200</span></div>
<div class="t rw l" style="left:109.8px;top:249.93px;width:174.6px;text-align:left;padding-left:2px;"><span class="s">UR - 9</span></div>
<div class="t rw r" style="left:286.4px;top:249.93px;width:53.8px;text-align:right;padding-right:1px;"><span class="s">0,00</span></div>
<div class="t rw r" style="left:342.2px;top:249.93px;width:54.4px;text-align:right;padding-right:1px;"><span class="s">129,00</span></div>
<div class="t rw c" style="left:398.6px;top:249.93px;width:55.1px;text-align:center;padding-left:8px;"><span class="s">5</span></div>
<div class="t rw l" style="left:455.7px;top:249.93px;width:126.6px;text-align:left;padding-left:2px;"><span class="s">PRINT STUDIO DOO</span></div>
<div class="t rw l" style="left:584.3px;top:249.93px;width:84.3px;text-align:left;padding-left:2px;"><span class="s">158-4-44</span></div>
<div class="t rw c" style="left:670.6px;top:249.93px;width:29.3px;text-align:center;"><span class="s">R-1</span></div>
<div class="t rw l" style="left:701.9px;top:249.93px;width:66.5px;text-align:left;padding-left:2px;"><span class="s">URA</span></div>
<div class="t rw c" style="left:856.8px;top:249.93px;width:59.5px;text-align:center;"><span class="s">11.01.2022</span></div>
<div class="t rw c" style="left:918.3px;top:249.93px;width:29.2px;text-align:center;padding-left:3px;"><span class="s">0</span></div>
<div class="t rw c" style="left:9.5px;top:258.46px;width:63.8px;text-align:center;"><span class="s">11.01.2022</span></div>
<div class="t rw l" style="left:75.3px;top:258.46px;width:32.5px;text-align:left;padding-left:2px;"><span class="s">2200</span></div>
<div class="t rw l" style="left:109.8px;top:258.46px;width:174.6px;text-align:left;padding-left:2px;"><span class="s">UR - 9</span></div>
<div class="t rw r" style="left:286.4px;top:258.46px;width:53.8px;text-align:right;padding-right:1px;"><span class="s">129,00</span></div>
<div class="t rw r" style="left:342.2px;top:258.46px;width:54.4px;text-align:right;padding-right:1px;"><span class="s">0,00</span></div>
<div class="t rw c" style="left:398.6px;top:258.46px;width:55.1px;text-align:center;padding-left:8px;"><span class="s">5</span></div>
<div class="t rw l" style="left:455.7px;top:258.46px;width:126.6px;text-align:left;padding-left:2px;"><span class="s">PRINT STUDIO DOO</span></div>
<div class="t rw l" style="left:584.3px;top:258.46px;width:84.3px;text-align:left;padding-left:2px;"><span class="s">158-4-44</span></div>
<div class="t rw c" style="left:670.6px;top:258.46px;width:29.3px;text-align:center;"><span class="s">R-1</span></div>
<div class="t rw l" style="left:701.9px;top:258.46px;width:66.5px;text-align:left;padding-left:2px;"><span class="s">URA</span></div>
<div class="t rw c" style="left:856.8px;top:258.46px;width:59.5px;text-align:center;"><span class="s">11.01.2022</span></div>
<div class="t rw c" style="left:918.3px;top:258.46px;width:29.2px;text-align:center;padding-left:3px;"><span class="s">0</span></div>
<div class="t rw c" style="left:9.5px;top:266.99px;width:63.8px;text-align:center;"><span class="s">11.01.2022</span></div>
<div class="t rw l" style="left:75.3px;top:266.99px;width:32.5px;text-align:left;padding-left:2px;"><span class="s">1020</span></div>
<div class="t rw l" style="left:109.8px;top:266.99px;width:174.6px;text-align:left;padding-left:2px;"><span class="s">UR - 9</span></div>
<div class="t rw r" style="left:286.4px;top:266.99px;width:53.8px;text-align:right;padding-right:1px;"><span class="s">0,00</span></div>
<div class="t rw r" style="left:342.2px;top:266.99px;width:54.4px;text-align:right;padding-right:1px;"><span class="s">129,00</span></div>
<div class="t rw c" style="left:398.6px;top:266.99px;width:55.1px;text-align:center;padding-left:8px;"><span class="s">5</span></div>
<div class="t rw l" style="left:455.7px;top:266.99px;width:126.6px;text-align:left;padding-left:2px;"><span class="s">PRINT STUDIO DOO</span></div>
<div class="t rw l" style="left:584.3px;top:266.99px;width:84.3px;text-align:left;padding-left:2px;"><span class="s">158-4-44</span></div>
<div class="t rw c" style="left:670.6px;top:266.99px;width:29.3px;text-align:center;"><span class="s">R-1</span></div>
<div class="t rw l" style="left:701.9px;top:266.99px;width:66.5px;text-align:left;padding-left:2px;"><span class="s">URA</span></div>
<div class="t rw c" style="left:856.8px;top:266.99px;width:59.5px;text-align:center;"><span class="s">11.01.2022</span></div>
<div class="t rw c" style="left:918.3px;top:266.99px;width:29.2px;text-align:center;padding-left:3px;"><span class="s">0</span></div>
<div class="t rw c" style="left:9.5px;top:275.53px;width:63.8px;text-align:center;"><span class="s">11.01.2022</span></div>
<div class="t rw l" style="left:75.3px;top:275.53px;width:32.5px;text-align:left;padding-left:2px;"><span class="s">2200</span></div>
<div class="t rw l" style="left:109.8px;top:275.53px;width:174.6px;text-align:left;padding-left:2px;"><span class="s">2</span></div>
<div class="t rw r" style="left:286.4px;top:275.53px;width:53.8px;text-align:right;padding-right:1px;"><span class="s">905,98</span></div>
<div class="t rw r" style="left:342.2px;top:275.53px;width:54.4px;text-align:right;padding-right:1px;"><span class="s">0,00</span></div>
<div class="t rw c" style="left:398.6px;top:275.53px;width:55.1px;text-align:center;padding-left:8px;"><span class="s">7</span></div>
<div class="t rw l" style="left:455.7px;top:275.53px;width:126.6px;text-align:left;padding-left:2px;"><span class="s">NORT D.O.O.</span></div>
<div class="t rw l" style="left:584.3px;top:275.53px;width:84.3px;text-align:left;padding-left:2px;"><span class="s">636-01-91</span></div>
<div class="t rw c" style="left:670.6px;top:275.53px;width:29.3px;text-align:center;"><span class="s">R-1</span></div>
<div class="t rw l" style="left:701.9px;top:275.53px;width:66.5px;text-align:left;padding-left:2px;"><span class="s">IZVOD</span></div>
<div class="t rw c" style="left:856.8px;top:275.53px;width:59.5px;text-align:center;"><span class="s">11.01.2022</span></div>
<div class="t rw c" style="left:918.3px;top:275.53px;width:29.2px;text-align:center;padding-left:3px;"><span class="s">0</span></div>
<div class="t rw c" style="left:9.5px;top:284.06px;width:63.8px;text-align:center;"><span class="s">11.01.2022</span></div>
<div class="t rw l" style="left:75.3px;top:284.06px;width:32.5px;text-align:left;padding-left:2px;"><span class="s">1020</span></div>
<div class="t rw l" style="left:109.8px;top:284.06px;width:174.6px;text-align:left;padding-left:2px;"><span class="s">2</span></div>
<div class="t rw r" style="left:286.4px;top:284.06px;width:53.8px;text-align:right;padding-right:1px;"><span class="s">900,00</span></div>
<div class="t rw r" style="left:342.2px;top:284.06px;width:54.4px;text-align:right;padding-right:1px;"><span class="s">0,00</span></div>
<div class="t rw c" style="left:398.6px;top:284.06px;width:55.1px;text-align:center;padding-left:8px;"><span class="s">7</span></div>
<div class="t rw l" style="left:701.9px;top:284.06px;width:66.5px;text-align:left;padding-left:2px;"><span class="s">IZVOD</span></div>
<div class="t rw c" style="left:856.8px;top:284.06px;width:59.5px;text-align:center;"><span class="s">11.01.2022</span></div>
<div class="t rw c" style="left:918.3px;top:284.06px;width:29.2px;text-align:center;padding-left:3px;"><span class="s">0</span></div>
<div class="t rw c" style="left:9.5px;top:292.59px;width:63.8px;text-align:center;"><span class="s">11.01.2022</span></div>
<div class="t rw l" style="left:75.3px;top:292.59px;width:32.5px;text-align:left;padding-left:2px;"><span class="s">1000</span></div>
<div class="t rw l" style="left:109.8px;top:292.59px;width:174.6px;text-align:left;padding-left:2px;"><span class="s">2</span></div>
<div class="t rw r" style="left:286.4px;top:292.59px;width:53.8px;text-align:right;padding-right:1px;"><span class="s">0,00</span></div>
<div class="t rw r" style="left:342.2px;top:292.59px;width:54.4px;text-align:right;padding-right:1px;"><span class="s">1.805,98</span></div>
<div class="t rw c" style="left:398.6px;top:292.59px;width:55.1px;text-align:center;padding-left:8px;"><span class="s">7</span></div>
<div class="t rw l" style="left:701.9px;top:292.59px;width:66.5px;text-align:left;padding-left:2px;"><span class="s">IZVOD</span></div>
<div class="t rw c" style="left:856.8px;top:292.59px;width:59.5px;text-align:center;"><span class="s">11.01.2022</span></div>
<div class="t rw c" style="left:918.3px;top:292.59px;width:29.2px;text-align:center;padding-left:3px;"><span class="s">0</span></div>
<div class="t rw c" style="left:9.5px;top:301.12px;width:63.8px;text-align:center;"><span class="s">12.01.2022</span></div>
<div class="t rw l" style="left:75.3px;top:301.12px;width:32.5px;text-align:left;padding-left:2px;"><span class="s">2200</span></div>
<div class="t rw l" style="left:109.8px;top:301.12px;width:174.6px;text-align:left;padding-left:2px;"><span class="s">3</span></div>
<div class="t rw r" style="left:286.4px;top:301.12px;width:53.8px;text-align:right;padding-right:1px;"><span class="s">726,19</span></div>
<div class="t rw r" style="left:342.2px;top:301.12px;width:54.4px;text-align:right;padding-right:1px;"><span class="s">0,00</span></div>
<div class="t rw c" style="left:398.6px;top:301.12px;width:55.1px;text-align:center;padding-left:8px;"><span class="s">8</span></div>
<div class="t rw l" style="left:455.7px;top:301.12px;width:126.6px;text-align:left;padding-left:2px;"><span class="s">INFO AM USLUGE D.O.O.</span></div>
<div class="t rw l" style="left:584.3px;top:301.12px;width:84.3px;text-align:left;padding-left:2px;"><span class="s">63/V1/1</span></div>
<div class="t rw c" style="left:670.6px;top:301.12px;width:29.3px;text-align:center;"><span class="s">R-1</span></div>
<div class="t rw l" style="left:701.9px;top:301.12px;width:66.5px;text-align:left;padding-left:2px;"><span class="s">IZVOD</span></div>
<div class="t rw c" style="left:856.8px;top:301.12px;width:59.5px;text-align:center;"><span class="s">12.01.2022</span></div>
<div class="t rw c" style="left:918.3px;top:301.12px;width:29.2px;text-align:center;padding-left:3px;"><span class="s">0</span></div>
<div class="t rw c" style="left:9.5px;top:309.66px;width:63.8px;text-align:center;"><span class="s">12.01.2022</span></div>
<div class="t rw l" style="left:75.3px;top:309.66px;width:32.5px;text-align:left;padding-left:2px;"><span class="s">11400</span></div>
<div class="t rw l" style="left:109.8px;top:309.66px;width:174.6px;text-align:left;padding-left:2px;"><span class="s">3</span></div>
<div class="t rw r" style="left:286.4px;top:309.66px;width:53.8px;text-align:right;padding-right:1px;"><span class="s">0,00</span></div>
<div class="t rw r" style="left:342.2px;top:309.66px;width:54.4px;text-align:right;padding-right:1px;"><span class="s">900,00</span></div>
<div class="t rw c" style="left:398.6px;top:309.66px;width:55.1px;text-align:center;padding-left:8px;"><span class="s">8</span></div>
<div class="t rw l" style="left:701.9px;top:309.66px;width:66.5px;text-align:left;padding-left:2px;"><span class="s">IZVOD</span></div>
<div class="t rw c" style="left:856.8px;top:309.66px;width:59.5px;text-align:center;"><span class="s">12.01.2022</span></div>
<div class="t rw c" style="left:918.3px;top:309.66px;width:29.2px;text-align:center;padding-left:3px;"><span class="s">0</span></div>
<div class="t rw c" style="left:9.5px;top:318.19px;width:63.8px;text-align:center;"><span class="s">12.01.2022</span></div>
<div class="t rw l" style="left:75.3px;top:318.19px;width:32.5px;text-align:left;padding-left:2px;"><span class="s">1000</span></div>
<div class="t rw l" style="left:109.8px;top:318.19px;width:174.6px;text-align:left;padding-left:2px;"><span class="s">3</span></div>
<div class="t rw r" style="left:286.4px;top:318.19px;width:53.8px;text-align:right;padding-right:1px;"><span class="s">900,00</span></div>
<div class="t rw r" style="left:342.2px;top:318.19px;width:54.4px;text-align:right;padding-right:1px;"><span class="s">0,00</span></div>
<div class="t rw c" style="left:398.6px;top:318.19px;width:55.1px;text-align:center;padding-left:8px;"><span class="s">8</span></div>
<div class="t rw l" style="left:701.9px;top:318.19px;width:66.5px;text-align:left;padding-left:2px;"><span class="s">IZVOD</span></div>
<div class="t rw c" style="left:856.8px;top:318.19px;width:59.5px;text-align:center;"><span class="s">12.01.2022</span></div>
<div class="t rw c" style="left:918.3px;top:318.19px;width:29.2px;text-align:center;padding-left:3px;"><span class="s">0</span></div>
<div class="t rw c" style="left:9.5px;top:326.72px;width:63.8px;text-align:center;"><span class="s">12.01.2022</span></div>
<div class="t rw l" style="left:75.3px;top:326.72px;width:32.5px;text-align:left;padding-left:2px;"><span class="s">1000</span></div>
<div class="t rw l" style="left:109.8px;top:326.72px;width:174.6px;text-align:left;padding-left:2px;"><span class="s">3</span></div>
<div class="t rw r" style="left:286.4px;top:326.72px;width:53.8px;text-align:right;padding-right:1px;"><span class="s">0,00</span></div>
<div class="t rw r" style="left:342.2px;top:326.72px;width:54.4px;text-align:right;padding-right:1px;"><span class="s">726,19</span></div>
<div class="t rw c" style="left:398.6px;top:326.72px;width:55.1px;text-align:center;padding-left:8px;"><span class="s">8</span></div>
<div class="t rw l" style="left:701.9px;top:326.72px;width:66.5px;text-align:left;padding-left:2px;"><span class="s">IZVOD</span></div>
<div class="t rw c" style="left:856.8px;top:326.72px;width:59.5px;text-align:center;"><span class="s">12.01.2022</span></div>
<div class="t rw c" style="left:918.3px;top:326.72px;width:29.2px;text-align:center;padding-left:3px;"><span class="s">0</span></div>
<div class="t rw c" style="left:9.5px;top:335.26px;width:63.8px;text-align:center;"><span class="s">12.01.2022</span></div>
<div class="t rw l" style="left:75.3px;top:335.26px;width:32.5px;text-align:left;padding-left:2px;"><span class="s">4100</span></div>
<div class="t rw l" style="left:109.8px;top:335.26px;width:174.6px;text-align:left;padding-left:2px;"><span class="s">3</span></div>
<div class="t rw r" style="left:286.4px;top:335.26px;width:53.8px;text-align:right;padding-right:1px;"><span class="s">169,00</span></div>
<div class="t rw r" style="left:342.2px;top:335.26px;width:54.4px;text-align:right;padding-right:1px;"><span class="s">0,00</span></div>
<div class="t rw c" style="left:398.6px;top:335.26px;width:55.1px;text-align:center;padding-left:8px;"><span class="s">13</span></div>
<div class="t rw l" style="left:701.9px;top:335.26px;width:66.5px;text-align:left;padding-left:2px;"><span class="s">IZVOD</span></div>
<div class="t rw c" style="left:856.8px;top:335.26px;width:59.5px;text-align:center;"><span class="s">12.01.2022</span></div>
<div class="t rw c" style="left:918.3px;top:335.26px;width:29.2px;text-align:center;padding-left:3px;"><span class="s">0</span></div>
<div class="t rw c" style="left:9.5px;top:343.79px;width:63.8px;text-align:center;"><span class="s">12.01.2022</span></div>
<div class="t rw l" style="left:75.3px;top:343.79px;width:32.5px;text-align:left;padding-left:2px;"><span class="s">1000</span></div>
<div class="t rw l" style="left:109.8px;top:343.79px;width:174.6px;text-align:left;padding-left:2px;"><span class="s">3</span></div>
<div class="t rw r" style="left:286.4px;top:343.79px;width:53.8px;text-align:right;padding-right:1px;"><span class="s">0,00</span></div>
<div class="t rw r" style="left:342.2px;top:343.79px;width:54.4px;text-align:right;padding-right:1px;"><span class="s">169,00</span></div>
<div class="t rw c" style="left:398.6px;top:343.79px;width:55.1px;text-align:center;padding-left:8px;"><span class="s">13</span></div>
<div class="t rw l" style="left:701.9px;top:343.79px;width:66.5px;text-align:left;padding-left:2px;"><span class="s">IZVOD</span></div>
<div class="t rw c" style="left:856.8px;top:343.79px;width:59.5px;text-align:center;"><span class="s">12.01.2022</span></div>
<div class="t rw c" style="left:918.3px;top:343.79px;width:29.2px;text-align:center;padding-left:3px;"><span class="s">0</span></div>
<div class="t rw c" style="left:9.5px;top:352.32px;width:63.8px;text-align:center;"><span class="s">14.01.2022</span></div>
<div class="t rw l" style="left:75.3px;top:352.32px;width:32.5px;text-align:left;padding-left:2px;"><span class="s">2200</span></div>
<div class="t rw l" style="left:109.8px;top:352.32px;width:174.6px;text-align:left;padding-left:2px;"><span class="s">UR - 7</span></div>
<div class="t rw r" style="left:286.4px;top:352.32px;width:53.8px;text-align:right;padding-right:1px;"><span class="s">0,00</span></div>
<div class="t rw r" style="left:342.2px;top:352.32px;width:54.4px;text-align:right;padding-right:1px;"><span class="s">24,60</span></div>
<div class="t rw c" style="left:398.6px;top:352.32px;width:55.1px;text-align:center;padding-left:8px;"><span class="s">5</span></div>
<div class="t rw l" style="left:455.7px;top:352.32px;width:126.6px;text-align:left;padding-left:2px;"><span class="s">HP-HRVATSKA POŠTA DD</span></div>
<div class="t rw l" style="left:584.3px;top:352.32px;width:84.3px;text-align:left;padding-left:2px;"><span class="s">1091/10106/104/2022</span></div>
<div class="t rw c" style="left:670.6px;top:352.32px;width:29.3px;text-align:center;"><span class="s">R-1</span></div>
<div class="t rw l" style="left:701.9px;top:352.32px;width:66.5px;text-align:left;padding-left:2px;"><span class="s">URA</span></div>
<div class="t rw c" style="left:856.8px;top:352.32px;width:59.5px;text-align:center;"><span class="s">14.01.2022</span></div>
<div class="t rw c" style="left:918.3px;top:352.32px;width:29.2px;text-align:center;padding-left:3px;"><span class="s">0</span></div>
<div class="t rw c" style="left:9.5px;top:360.86px;width:63.8px;text-align:center;"><span class="s">14.01.2022</span></div>
<div class="t rw l" style="left:75.3px;top:360.86px;width:32.5px;text-align:left;padding-left:2px;"><span class="s">4101</span></div>
<div class="t rw l" style="left:109.8px;top:360.86px;width:174.6px;text-align:left;padding-left:2px;"><span class="s">UR - 7</span></div>
<div class="t rw r" style="left:286.4px;top:360.86px;width:53.8px;text-align:right;padding-right:1px;"><span class="s">24,60</span></div>
<div class="t rw r" style="left:342.2px;top:360.86px;width:54.4px;text-align:right;padding-right:1px;"><span class="s">0,00</span></div>
<div class="t rw c" style="left:398.6px;top:360.86px;width:55.1px;text-align:center;padding-left:8px;"><span class="s">5</span></div>
<div class="t rw l" style="left:455.7px;top:360.86px;width:126.6px;text-align:left;padding-left:2px;"><span class="s">HP-HRVATSKA POŠTA DD</span></div>
<div class="t rw l" style="left:584.3px;top:360.86px;width:84.3px;text-align:left;padding-left:2px;"><span class="s">1091/10106/104/2022</span></div>
<div class="t rw c" style="left:670.6px;top:360.86px;width:29.3px;text-align:center;"><span class="s">R-1</span></div>
<div class="t rw l" style="left:701.9px;top:360.86px;width:66.5px;text-align:left;padding-left:2px;"><span class="s">URA</span></div>
<div class="t rw c" style="left:856.8px;top:360.86px;width:59.5px;text-align:center;"><span class="s">14.01.2022</span></div>
<div class="t rw c" style="left:918.3px;top:360.86px;width:29.2px;text-align:center;padding-left:3px;"><span class="s">0</span></div>
<div class="t rw c" style="left:9.5px;top:369.39px;width:63.8px;text-align:center;"><span class="s">14.01.2022</span></div>
<div class="t rw l" style="left:75.3px;top:369.39px;width:32.5px;text-align:left;padding-left:2px;"><span class="s">2200</span></div>
<div class="t rw l" style="left:109.8px;top:369.39px;width:174.6px;text-align:left;padding-left:2px;"><span class="s">UR - 7</span></div>
<div class="t rw r" style="left:286.4px;top:369.39px;width:53.8px;text-align:right;padding-right:1px;"><span class="s">24,60</span></div>
<div class="t rw r" style="left:342.2px;top:369.39px;width:54.4px;text-align:right;padding-right:1px;"><span class="s">0,00</span></div>
<div class="t rw c" style="left:398.6px;top:369.39px;width:55.1px;text-align:center;padding-left:8px;"><span class="s">5</span></div>
<div class="t rw l" style="left:455.7px;top:369.39px;width:126.6px;text-align:left;padding-left:2px;"><span class="s">HP-HRVATSKA POŠTA DD</span></div>
<div class="t rw l" style="left:584.3px;top:369.39px;width:84.3px;text-align:left;padding-left:2px;"><span class="s">1091/10106/104/2022</span></div>
<div class="t rw c" style="left:670.6px;top:369.39px;width:29.3px;text-align:center;"><span class="s">R-1</span></div>
<div class="t rw l" style="left:701.9px;top:369.39px;width:66.5px;text-align:left;padding-left:2px;"><span class="s">URA</span></div>
<div class="t rw c" style="left:856.8px;top:369.39px;width:59.5px;text-align:center;"><span class="s">14.01.2022</span></div>
<div class="t rw c" style="left:918.3px;top:369.39px;width:29.2px;text-align:center;padding-left:3px;"><span class="s">0</span></div>
<div class="t rw c" style="left:9.5px;top:377.92px;width:63.8px;text-align:center;"><span class="s">14.01.2022</span></div>
<div class="t rw l" style="left:75.3px;top:377.92px;width:32.5px;text-align:left;padding-left:2px;"><span class="s">1020</span></div>
<div class="t rw l" style="left:109.8px;top:377.92px;width:174.6px;text-align:left;padding-left:2px;"><span class="s">UR - 7</span></div>
<div class="t rw r" style="left:286.4px;top:377.92px;width:53.8px;text-align:right;padding-right:1px;"><span class="s">0,00</span></div>
<div class="t rw r" style="left:342.2px;top:377.92px;width:54.4px;text-align:right;padding-right:1px;"><span class="s">24,60</span></div>
<div class="t rw c" style="left:398.6px;top:377.92px;width:55.1px;text-align:center;padding-left:8px;"><span class="s">5</span></div>
<div class="t rw l" style="left:455.7px;top:377.92px;width:126.6px;text-align:left;padding-left:2px;"><span class="s">HP-HRVATSKA POŠTA DD</span></div>
<div class="t rw l" style="left:584.3px;top:377.92px;width:84.3px;text-align:left;padding-left:2px;"><span class="s">1091/10106/104/2022</span></div>
<div class="t rw c" style="left:670.6px;top:377.92px;width:29.3px;text-align:center;"><span class="s">R-1</span></div>
<div class="t rw l" style="left:701.9px;top:377.92px;width:66.5px;text-align:left;padding-left:2px;"><span class="s">URA</span></div>
<div class="t rw c" style="left:856.8px;top:377.92px;width:59.5px;text-align:center;"><span class="s">14.01.2022</span></div>
<div class="t rw c" style="left:918.3px;top:377.92px;width:29.2px;text-align:center;padding-left:3px;"><span class="s">0</span></div>
<div class="t rw c" style="left:9.5px;top:386.45px;width:63.8px;text-align:center;"><span class="s">15.01.2022</span></div>
<div class="t rw l" style="left:75.3px;top:386.45px;width:32.5px;text-align:left;padding-left:2px;"><span class="s">3501</span></div>
<div class="t rw l" style="left:109.8px;top:386.45px;width:174.6px;text-align:left;padding-left:2px;"><span class="s">UR - 3</span></div>
<div class="t rw r" style="left:286.4px;top:386.45px;width:53.8px;text-align:right;padding-right:1px;"><span class="s">124,29</span></div>
<div class="t rw r" style="left:342.2px;top:386.45px;width:54.4px;text-align:right;padding-right:1px;"><span class="s">0,00</span></div>
<div class="t rw c" style="left:398.6px;top:386.45px;width:55.1px;text-align:center;padding-left:8px;"><span class="s">5</span></div>
<div class="t rw l" style="left:455.7px;top:386.45px;width:126.6px;text-align:left;padding-left:2px;"><span class="s">DOBAR PARTNER D.O.O.</span></div>
<div class="t rw l" style="left:584.3px;top:386.45px;width:84.3px;text-align:left;padding-left:2px;"><span class="s">274-01-91</span></div>
<div class="t rw c" style="left:670.6px;top:386.45px;width:29.3px;text-align:center;"><span class="s">R-1</span></div>
<div class="t rw l" style="left:701.9px;top:386.45px;width:66.5px;text-align:left;padding-left:2px;"><span class="s">URA</span></div>
<div class="t rw c" style="left:856.8px;top:386.45px;width:59.5px;text-align:center;"><span class="s">15.01.2022</span></div>
<div class="t rw c" style="left:918.3px;top:386.45px;width:29.2px;text-align:center;padding-left:3px;"><span class="s">0</span></div>
<div class="t rw c" style="left:9.5px;top:394.99px;width:63.8px;text-align:center;"><span class="s">15.01.2022</span></div>
<div class="t rw l" style="left:75.3px;top:394.99px;width:32.5px;text-align:left;padding-left:2px;"><span class="s">1700</span></div>
<div class="t rw l" style="left:109.8px;top:394.99px;width:174.6px;text-align:left;padding-left:2px;"><span class="s">UR - 3</span></div>
<div class="t rw r" style="left:286.4px;top:394.99px;width:53.8px;text-align:right;padding-right:1px;"><span class="s">31,07</span></div>
<div class="t rw r" style="left:342.2px;top:394.99px;width:54.4px;text-align:right;padding-right:1px;"><span class="s">0,00</span></div>
<div class="t rw c" style="left:398.6px;top:394.99px;width:55.1px;text-align:center;padding-left:8px;"><span class="s">5</span></div>
<div class="t rw l" style="left:455.7px;top:394.99px;width:126.6px;text-align:left;padding-left:2px;"><span class="s">DOBAR PARTNER D.O.O.</span></div>
<div class="t rw l" style="left:584.3px;top:394.99px;width:84.3px;text-align:left;padding-left:2px;"><span class="s">274-01-91</span></div>
<div class="t rw c" style="left:670.6px;top:394.99px;width:29.3px;text-align:center;"><span class="s">R-1</span></div>
<div class="t rw l" style="left:701.9px;top:394.99px;width:66.5px;text-align:left;padding-left:2px;"><span class="s">URA</span></div>
<div class="t rw c" style="left:856.8px;top:394.99px;width:59.5px;text-align:center;"><span class="s">15.01.2022</span></div>
<div class="t rw c" style="left:918.3px;top:394.99px;width:29.2px;text-align:center;padding-left:3px;"><span class="s">0</span></div>
<div class="t rw c" style="left:9.5px;top:403.52px;width:63.8px;text-align:center;"><span class="s">15.01.2022</span></div>
<div class="t rw l" style="left:75.3px;top:403.52px;width:32.5px;text-align:left;padding-left:2px;"><span class="s">2200</span></div>
<div class="t rw l" style="left:109.8px;top:403.52px;width:174.6px;text-align:left;padding-left:2px;"><span class="s">UR - 3</span></div>
<div class="t rw r" style="left:286.4px;top:403.52px;width:53.8px;text-align:right;padding-right:1px;"><span class="s">0,00</span></div>
<div class="t rw r" style="left:342.2px;top:403.52px;width:54.4px;text-align:right;padding-right:1px;"><span class="s">155,36</span></div>
<div class="t rw c" style="left:398.6px;top:403.52px;width:55.1px;text-align:center;padding-left:8px;"><span class="s">5</span></div>
<div class="t rw l" style="left:455.7px;top:403.52px;width:126.6px;text-align:left;padding-left:2px;"><span class="s">DOBAR PARTNER D.O.O.</span></div>
<div class="t rw l" style="left:584.3px;top:403.52px;width:84.3px;text-align:left;padding-left:2px;"><span class="s">274-01-91</span></div>
<div class="t rw c" style="left:670.6px;top:403.52px;width:29.3px;text-align:center;"><span class="s">R-1</span></div>
<div class="t rw l" style="left:701.9px;top:403.52px;width:66.5px;text-align:left;padding-left:2px;"><span class="s">URA</span></div>
<div class="t rw c" style="left:856.8px;top:403.52px;width:59.5px;text-align:center;"><span class="s">15.01.2022</span></div>
<div class="t rw c" style="left:918.3px;top:403.52px;width:29.2px;text-align:center;padding-left:3px;"><span class="s">0</span></div>
<div class="t rw c" style="left:9.5px;top:412.05px;width:63.8px;text-align:center;"><span class="s">15.01.2022</span></div>
<div class="t rw l" style="left:75.3px;top:412.05px;width:32.5px;text-align:left;padding-left:2px;"><span class="s">4040</span></div>
<div class="t rw l" style="left:109.8px;top:412.05px;width:174.6px;text-align:left;padding-left:2px;"><span class="s">UR - 3</span></div>
<div class="t rw r" style="left:286.4px;top:412.05px;width:53.8px;text-align:right;padding-right:1px;"><span class="s">124,29</span></div>
<div class="t rw r" style="left:342.2px;top:412.05px;width:54.4px;text-align:right;padding-right:1px;"><span class="s">0,00</span></div>
<div class="t rw c" style="left:398.6px;top:412.05px;width:55.1px;text-align:center;padding-left:8px;"><span class="s">5</span></div>
<div class="t rw l" style="left:455.7px;top:412.05px;width:126.6px;text-align:left;padding-left:2px;"><span class="s">DOBAR PARTNER D.O.O.</span></div>
<div class="t rw l" style="left:584.3px;top:412.05px;width:84.3px;text-align:left;padding-left:2px;"><span class="s">274-01-91</span></div>
<div class="t rw c" style="left:670.6px;top:412.05px;width:29.3px;text-align:center;"><span class="s">R-1</span></div>
<div class="t rw l" style="left:701.9px;top:412.05px;width:66.5px;text-align:left;padding-left:2px;"><span class="s">URA</span></div>
<div class="t rw c" style="left:856.8px;top:412.05px;width:59.5px;text-align:center;"><span class="s">15.01.2022</span></div>
<div class="t rw c" style="left:918.3px;top:412.05px;width:29.2px;text-align:center;padding-left:3px;"><span class="s">0</span></div>
<div class="t rw c" style="left:9.5px;top:420.59px;width:63.8px;text-align:center;"><span class="s">15.01.2022</span></div>
<div class="t rw l" style="left:75.3px;top:420.59px;width:32.5px;text-align:left;padding-left:2px;"><span class="s">3501</span></div>
<div class="t rw l" style="left:109.8px;top:420.59px;width:174.6px;text-align:left;padding-left:2px;"><span class="s">UR - 3</span></div>
<div class="t rw r" style="left:286.4px;top:420.59px;width:53.8px;text-align:right;padding-right:1px;"><span class="s">0,00</span></div>
<div class="t rw r" style="left:342.2px;top:420.59px;width:54.4px;text-align:right;padding-right:1px;"><span class="s">124,29</span></div>
<div class="t rw c" style="left:398.6px;top:420.59px;width:55.1px;text-align:center;padding-left:8px;"><span class="s">5</span></div>
<div class="t rw l" style="left:455.7px;top:420.59px;width:126.6px;text-align:left;padding-left:2px;"><span class="s">DOBAR PARTNER D.O.O.</span></div>
<div class="t rw l" style="left:584.3px;top:420.59px;width:84.3px;text-align:left;padding-left:2px;"><span class="s">274-01-91</span></div>
<div class="t rw c" style="left:670.6px;top:420.59px;width:29.3px;text-align:center;"><span class="s">R-1</span></div>
<div class="t rw l" style="left:701.9px;top:420.59px;width:66.5px;text-align:left;padding-left:2px;"><span class="s">URA</span></div>
<div class="t rw c" style="left:856.8px;top:420.59px;width:59.5px;text-align:center;"><span class="s">15.01.2022</span></div>
<div class="t rw c" style="left:918.3px;top:420.59px;width:29.2px;text-align:center;padding-left:3px;"><span class="s">0</span></div>
<div class="t rw c" style="left:9.5px;top:429.12px;width:63.8px;text-align:center;"><span class="s">17.01.2022</span></div>
<div class="t rw l" style="left:75.3px;top:429.12px;width:32.5px;text-align:left;padding-left:2px;"><span class="s">3501</span></div>
<div class="t rw l" style="left:109.8px;top:429.12px;width:174.6px;text-align:left;padding-left:2px;"><span class="s">UR - 2</span></div>
<div class="t rw r" style="left:286.4px;top:429.12px;width:53.8px;text-align:right;padding-right:1px;"><span class="s">580,95</span></div>
<div class="t rw r" style="left:342.2px;top:429.12px;width:54.4px;text-align:right;padding-right:1px;"><span class="s">0,00</span></div>
<div class="t rw c" style="left:398.6px;top:429.12px;width:55.1px;text-align:center;padding-left:8px;"><span class="s">5</span></div>
<div class="t rw l" style="left:455.7px;top:429.12px;width:126.6px;text-align:left;padding-left:2px;"><span class="s">INFO AM USLUGE D.O.O.</span></div>
<div class="t rw l" style="left:584.3px;top:429.12px;width:84.3px;text-align:left;padding-left:2px;"><span class="s">63/V1/1</span></div>
<div class="t rw c" style="left:670.6px;top:429.12px;width:29.3px;text-align:center;"><span class="s">R-1</span></div>
<div class="t rw l" style="left:701.9px;top:429.12px;width:66.5px;text-align:left;padding-left:2px;"><span class="s">URA</span></div>
<div class="t rw c" style="left:856.8px;top:429.12px;width:59.5px;text-align:center;"><span class="s">17.01.2022</span></div>
<div class="t rw c" style="left:918.3px;top:429.12px;width:29.2px;text-align:center;padding-left:3px;"><span class="s">0</span></div>
<div class="t rw c" style="left:9.5px;top:437.65px;width:63.8px;text-align:center;"><span class="s">17.01.2022</span></div>
<div class="t rw l" style="left:75.3px;top:437.65px;width:32.5px;text-align:left;padding-left:2px;"><span class="s">1700</span></div>
<div class="t rw l" style="left:109.8px;top:437.65px;width:174.6px;text-align:left;padding-left:2px;"><span class="s">UR - 2</span></div>
<div class="t rw r" style="left:286.4px;top:437.65px;width:53.8px;text-align:right;padding-right:1px;"><span class="s">145,24</span></div>
<div class="t rw r" style="left:342.2px;top:437.65px;width:54.4px;text-align:right;padding-right:1px;"><span class="s">0,00</span></div>
<div class="t rw c" style="left:398.6px;top:437.65px;width:55.1px;text-align:center;padding-left:8px;"><span class="s">5</span></div>
<div class="t rw l" style="left:455.7px;top:437.65px;width:126.6px;text-align:left;padding-left:2px;"><span class="s">INFO AM USLUGE D.O.O.</span></div>
<div class="t rw l" style="left:584.3px;top:437.65px;width:84.3px;text-align:left;padding-left:2px;"><span class="s">63/V1/1</span></div>
<div class="t rw c" style="left:670.6px;top:437.65px;width:29.3px;text-align:center;"><span class="s">R-1</span></div>
<div class="t rw l" style="left:701.9px;top:437.65px;width:66.5px;text-align:left;padding-left:2px;"><span class="s">URA</span></div>
<div class="t rw c" style="left:856.8px;top:437.65px;width:59.5px;text-align:center;"><span class="s">17.01.2022</span></div>
<div class="t rw c" style="left:918.3px;top:437.65px;width:29.2px;text-align:center;padding-left:3px;"><span class="s">0</span></div>
<div class="t rw c" style="left:9.5px;top:446.19px;width:63.8px;text-align:center;"><span class="s">17.01.2022</span></div>
<div class="t rw l" style="left:75.3px;top:446.19px;width:32.5px;text-align:left;padding-left:2px;"><span class="s">2200</span></div>
<div class="t rw l" style="left:109.8px;top:446.19px;width:174.6px;text-align:left;padding-left:2px;"><span class="s">UR - 2</span></div>
<div class="t rw r" style="left:286.4px;top:446.19px;width:53.8px;text-align:right;padding-right:1px;"><span class="s">0,00</span></div>
<div class="t rw r" style="left:342.2px;top:446.19px;width:54.4px;text-align:right;padding-right:1px;"><span class="s">726,19</span></div>
<div class="t rw c" style="left:398.6px;top:446.19px;width:55.1px;text-align:center;padding-left:8px;"><span class="s">5</span></div>
<div class="t rw l" style="left:455.7px;top:446.19px;width:126.6px;text-align:left;padding-left:2px;"><span class="s">INFO AM USLUGE D.O.O.</span></div>
<div class="t rw l" style="left:584.3px;top:446.19px;width:84.3px;text-align:left;padding-left:2px;"><span class="s">63/V1/1</span></div>
<div class="t rw c" style="left:670.6px;top:446.19px;width:29.3px;text-align:center;"><span class="s">R-1</span></div>
<div class="t rw l" style="left:701.9px;top:446.19px;width:66.5px;text-align:left;padding-left:2px;"><span class="s">URA</span></div>
<div class="t rw c" style="left:856.8px;top:446.19px;width:59.5px;text-align:center;"><span class="s">17.01.2022</span></div>
<div class="t rw c" style="left:918.3px;top:446.19px;width:29.2px;text-align:center;padding-left:3px;"><span class="s">0</span></div>
<div class="t rw c" style="left:9.5px;top:454.72px;width:63.8px;text-align:center;"><span class="s">17.01.2022</span></div>
<div class="t rw l" style="left:75.3px;top:454.72px;width:32.5px;text-align:left;padding-left:2px;"><span class="s">4040</span></div>
<div class="t rw l" style="left:109.8px;top:454.72px;width:174.6px;text-align:left;padding-left:2px;"><span class="s">UR - 2</span></div>
<div class="t rw r" style="left:286.4px;top:454.72px;width:53.8px;text-align:right;padding-right:1px;"><span class="s">580,95</span></div>
<div class="t rw r" style="left:342.2px;top:454.72px;width:54.4px;text-align:right;padding-right:1px;"><span class="s">0,00</span></div>
<div class="t rw c" style="left:398.6px;top:454.72px;width:55.1px;text-align:center;padding-left:8px;"><span class="s">5</span></div>
<div class="t rw l" style="left:455.7px;top:454.72px;width:126.6px;text-align:left;padding-left:2px;"><span class="s">INFO AM USLUGE D.O.O.</span></div>
<div class="t rw l" style="left:584.3px;top:454.72px;width:84.3px;text-align:left;padding-left:2px;"><span class="s">63/V1/1</span></div>
<div class="t rw c" style="left:670.6px;top:454.72px;width:29.3px;text-align:center;"><span class="s">R-1</span></div>
<div class="t rw l" style="left:701.9px;top:454.72px;width:66.5px;text-align:left;padding-left:2px;"><span class="s">URA</span></div>
<div class="t rw c" style="left:856.8px;top:454.72px;width:59.5px;text-align:center;"><span class="s">17.01.2022</span></div>
<div class="t rw c" style="left:918.3px;top:454.72px;width:29.2px;text-align:center;padding-left:3px;"><span class="s">0</span></div>
</div>
<div class="a" style="left:3px;top:490.2px;width:1013.5px;height:26.4px;background:#f0f0f0;border-top:1px solid #fff;border-left:1px solid #fff;border-right:1.2px solid #8a8a8a;border-bottom:1.2px solid #8a8a8a"></div>
<div class="t" style="left:13px;top:497px;font-size:8.4px;line-height:11px;font-weight:bold;color:#ff2020">Duguje:</div>
<div class="t" style="left:321px;top:497px;font-size:8.4px;line-height:11px;font-weight:bold;color:#ff2020">Potražuje:</div>
<div class="t" style="left:759.3px;top:497px;font-size:9px;line-height:11px;font-weight:bold;color:#ff2020">Saldo:</div>
<div class="t" style="left:149.6px;top:497.5px;letter-spacing:0px;font-size:8.4px;line-height:11px;font-weight:bold;color:#ff2020">0,00</div>
<div class="t" style="left:476.4px;top:497.5px;letter-spacing:0px;font-size:8.4px;line-height:11px;font-weight:bold;color:#ff2020">0,00</div>
<div class="t" style="left:887.5px;top:497.5px;letter-spacing:0.7px;font-size:8.4px;line-height:11px;font-weight:bold;color:#ff2020">0,00</div>
<div class="a" style="left:4px;top:521.8px;width:67.5px;height:25.8px;background:#fdfdfd;border:1px solid #e2e2e2;border-radius:2px"></div>
<div class="t" style="left:4px;top:527px;width:67.5px;text-align:left;padding-left:8px;font-size:7.1px;line-height:8.7px;color:#3838f0">F5 - ispis glavne<br>knjige</div>
<div class="a" style="left:78.5px;top:521.8px;width:67.5px;height:25.8px;background:#fdfdfd;border:1px solid #e2e2e2;border-radius:2px"></div>
<div class="t" style="left:78.5px;top:527px;width:67.5px;text-align:center;font-size:7.1px;line-height:8.7px;color:#3838f0">F6 - izrada PDV<br>obrazca</div>
<div class="a" style="left:153.3px;top:521.8px;width:67.5px;height:25.8px;background:#fdfdfd;border:1px solid #e2e2e2;border-radius:2px"></div>
<div class="t" style="left:153.3px;top:527px;width:67.5px;text-align:center;font-size:7.1px;line-height:8.7px;color:#3838f0">F8 - izrada PDV<br>obrazca stari</div>
<div class="a" style="left:227.6px;top:521.8px;width:67.5px;height:25.8px;background:#fdfdfd;border:1px solid #e2e2e2;border-radius:2px"></div>
<div class="t" style="left:227.6px;top:531px;width:67.5px;text-align:center;font-size:7.1px;line-height:9px;color:#3030e8">F9 - saldiranje</div>
<div class="t" style="left:380.8px;top:529.5px;font-size:7.2px;line-height:9px;color:#ff2020">Ukupno stavaka:</div>
<div class="t" style="left:475.8px;top:530.5px;font-size:8.4px;line-height:11px;font-weight:bold;color:#ff2020">0</div>
<div class="a" style="left:976.4px;top:521.5px;width:45.8px;height:26.5px;background:#fbfbfb;border:1px solid #e6e6e6;border-radius:2px"></div>
<svg class="a" style="left:986px;top:522px" width="27" height="26" viewBox="0 0 27 26">
<defs><linearGradient id="g" x1="0" y1="0" x2="1" y2="1"><stop offset="0" stop-color="#f4b8b0"/><stop offset="0.45" stop-color="#e05050"/><stop offset="1" stop-color="#e83a3a"/></linearGradient></defs>
<path d="M0.8,4.6 L4.6,0.6 L13.1,9 L21.6,0.6 L25.4,4.6 L17,13 L25.4,21.4 L21.6,25.4 L13.1,17 L4.6,25.4 L0.8,21.4 L9.2,13 Z" fill="url(#g)" stroke="#b02828" stroke-width="0.8"/>
</svg>
<div class="a" style="left:0;top:548.8px;width:1024px;height:1.2px;background:#8f8fa8"></div>
</div></body></html>
